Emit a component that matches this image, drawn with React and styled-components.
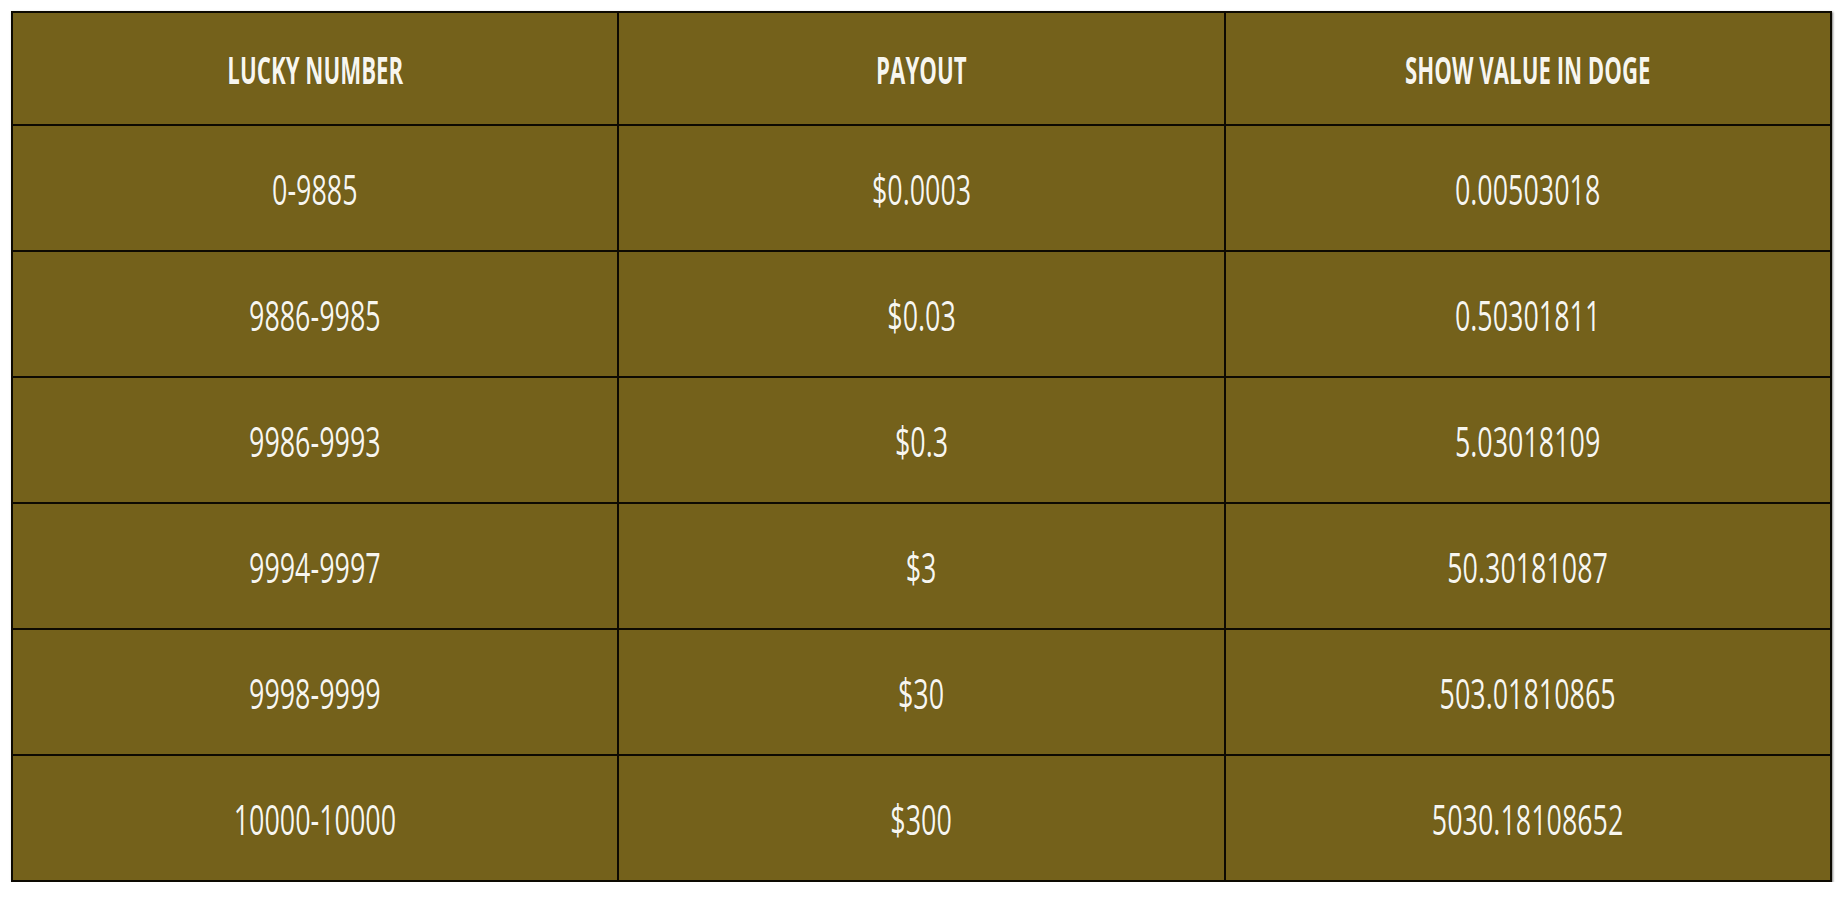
import React from 'react'
import styled, { createGlobalStyle } from 'styled-components'

const GlobalStyle = createGlobalStyle`
  html, body {
    margin: 0;
    background: #ffffff;
  }
`

const Page = styled.div`
  padding: 11px 11px 0 11px;
`

const Table = styled.table`
  width: 1821px;
  border-collapse: collapse;
  background: #74611b;
  border: 2px solid #0d0a02;
  box-shadow: 1px 1px 2px rgba(0, 0, 0, 0.5);
  font-family: 'Open Sans', 'Liberation Sans', sans-serif;
  color: #f8f6ee;
  table-layout: fixed;
`

const HeadCell = styled.th`
  height: 111px;
  border: 2px solid #0d0a02;
  text-align: center;
  font-weight: 700;
  font-size: 38px;
  padding: 0;
`

const Cell = styled.td`
  height: 124px;
  border: 2px solid #0d0a02;
  text-align: center;
  font-weight: 500;
  font-size: 42px;
  padding: 0;
`

const Squeeze = styled.span`
  display: inline-block;
  transform: scaleX(${p => p.$x});
  white-space: nowrap;
  text-shadow: 0 0 1px rgba(0, 0, 0, 0.4);
`

const rows = [
  ['0-9885', '$0.0003', '0.00503018'],
  ['9886-9985', '$0.03', '0.50301811'],
  ['9986-9993', '$0.3', '5.03018109'],
  ['9994-9997', '$3', '50.30181087'],
  ['9998-9999', '$30', '503.01810865'],
  ['10000-10000', '$300', '5030.18108652'],
]

export default function App() {
  return (
    <>
      <GlobalStyle />
      <Page>
        <Table>
          <thead>
            <tr>
              {['LUCKY NUMBER', 'PAYOUT', 'SHOW VALUE IN DOGE'].map(h => (
                <HeadCell key={h}>
                  <Squeeze $x={0.585}>{h}</Squeeze>
                </HeadCell>
              ))}
            </tr>
          </thead>
          <tbody>
            {rows.map(r => (
              <tr key={r[0]}>
                {r.map((v, i) => (
                  <Cell key={i}>
                    <Squeeze $x={0.64}>{v}</Squeeze>
                  </Cell>
                ))}
              </tr>
            ))}
          </tbody>
        </Table>
      </Page>
    </>
  )
}
